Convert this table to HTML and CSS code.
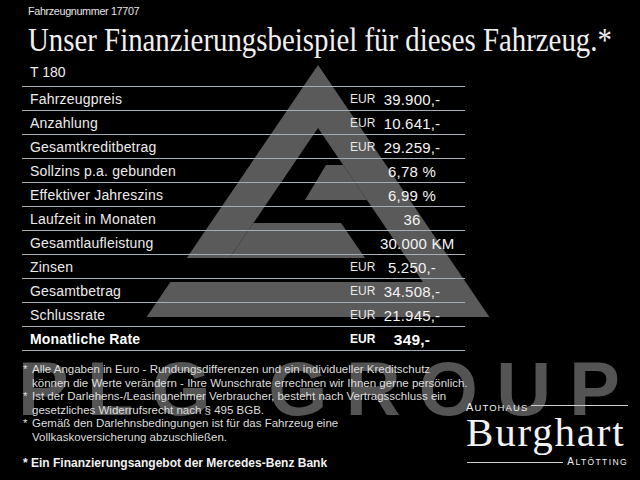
FILE: index.html
```html
<!DOCTYPE html>
<html lang="de">
<head>
<meta charset="utf-8">
<title>Finanzierungsbeispiel</title>
<link rel="stylesheet" href="styles.css">
</head>
<body>
<div class="page">
  <svg class="watermark" viewBox="0 0 640 480" width="640" height="480" aria-hidden="true">
    <g class="wm">
      <polygon points="318,65 146.6,317 489.4,317"/>
    </g>
    <g class="wm-cut">
      <polygon points="318,128 213.3,282 422.7,282"/>
      <polygon points="100,258 406.4,258 422.7,282 100,282"/>
    </g>
    <g class="wm">
      <polygon points="326,165 343.2,165 367,200 305,200"/>
      <polygon points="253.4,223 341,223 365,258 229.6,258"/>
    </g>
    <text class="wm-text" x="18" y="415" textLength="602" lengthAdjust="spacing">PLG GROUP</text>
  </svg>

  <div class="content">
    <div class="fznr">Fahrzeugnummer 17707</div>
    <div class="title">Unser Finanzierungsbeispiel für dieses Fahrzeug.*</div>
    <div class="model">T 180</div>

    <div class="table">
      <div class="row"><span class="lbl">Fahrzeugpreis</span><span class="cur">EUR</span><span class="val">39.900,-</span></div>
      <div class="row"><span class="lbl">Anzahlung</span><span class="cur">EUR</span><span class="val">10.641,-</span></div>
      <div class="row"><span class="lbl">Gesamtkreditbetrag</span><span class="cur">EUR</span><span class="val">29.259,-</span></div>
      <div class="row"><span class="lbl">Sollzins p.a. gebunden</span><span class="cur"></span><span class="val">6,78 %</span></div>
      <div class="row"><span class="lbl">Effektiver Jahreszins</span><span class="cur"></span><span class="val">6,99 %</span></div>
      <div class="row"><span class="lbl">Laufzeit in Monaten</span><span class="cur"></span><span class="val">36</span></div>
      <div class="row"><span class="lbl">Gesamtlaufleistung</span><span class="cur"></span><span class="val val-wide">30.000 KM</span></div>
      <div class="row"><span class="lbl">Zinsen</span><span class="cur">EUR</span><span class="val">5.250,-</span></div>
      <div class="row"><span class="lbl">Gesamtbetrag</span><span class="cur">EUR</span><span class="val">34.508,-</span></div>
      <div class="row"><span class="lbl">Schlussrate</span><span class="cur">EUR</span><span class="val">21.945,-</span></div>
      <div class="row row-bold"><span class="lbl">Monatliche Rate</span><span class="cur">EUR</span><span class="val">349,-</span></div>
    </div>

    <div class="footer">
      <div class="notes">
        <div class="fn"><span class="star">*</span><span>Alle Angaben in Euro - Rundungsdifferenzen und ein individueller Kreditschutz<br>können die Werte verändern - Ihre Wunschrate errechnen wir Ihnen gerne persönlich.</span></div>
        <div class="fn"><span class="star">*</span><span>Ist der Darlehens-/Leasingnehmer Verbraucher, besteht nach Vertragsschluss ein<br>gesetzliches Widerrufsrecht nach § 495 BGB.</span></div>
        <div class="fn"><span class="star">*</span><span>Gemäß den Darlehnsbedingungen ist für das Fahrzeug eine<br>Vollkaskoversicherung abzuschließen.</span></div>
        <div class="bank">* Ein Finanzierungsangebot der Mercedes-Benz Bank</div>
      </div>
      <div class="logo">
        <div class="logo-top"><span class="logo-small">A<span class="sc">UTOHAUS</span></span><span class="rule rule-top"></span></div>
        <div class="logo-name">Burghart</div>
        <div class="logo-bottom"><span class="rule rule-bottom"></span><span class="logo-small logo-city">A<span class="sc">LTÖTTING</span></span></div>
      </div>
    </div>
  </div>
</div>
</body>
</html>
```

FILE: styles.css
```css
html, body {
  margin: 0;
  padding: 0;
  background: #000;
}

.page {
  position: relative;
  width: 640px;
  height: 480px;
  overflow: hidden;
  background: #000;
  color: #fff;
  font-family: "Liberation Sans", Arial, sans-serif;
}

.watermark {
  position: absolute;
  left: 0;
  top: 0;
  z-index: 0;
}

.wm polygon {
  fill: #5a5a5a;
}

.wm-cut polygon {
  fill: #000;
}

.wm-text {
  fill: #545454;
  font-family: "Liberation Sans", Arial, sans-serif;
  font-weight: bold;
  font-size: 76px;
}

.content {
  position: relative;
  z-index: 1;
  padding-top: 4px;
}

.fznr {
  margin-left: 28px;
  font-size: 10.8px;
  line-height: 14px;
  letter-spacing: -0.35px;
  color: #e4e4e4;
}

.title {
  margin: 6px 0 0 28px;
  font-family: "Liberation Serif", "Times New Roman", serif;
  font-size: 33px;
  line-height: 33px;
  white-space: nowrap;
  color: #f0f0f0;
  transform: scaleX(0.874);
  transform-origin: left top;
}

.model {
  margin: 7px 0 0 30px;
  font-size: 14px;
  line-height: 16px;
  color: #eee;
}

.table {
  margin: 6px 0 0 22px;
  width: 443px;
  border-top: 1px solid #a6aeb8;
}

.row {
  display: grid;
  grid-template-columns: 320px 30px 64px;
  align-items: center;
  height: 23px;
  padding-left: 8px;
  border-bottom: 1px solid #a6aeb8;
}

.lbl {
  font-size: 14px;
  color: #ececec;
  letter-spacing: 0.2px;
}

.cur {
  font-size: 12px;
  color: #e8e8e8;
}

.val {
  font-size: 15px;
  text-align: center;
  color: #f4f4f4;
  padding-top: 2px;
  letter-spacing: 0.2px;
}

.val-wide {
  white-space: nowrap;
}

.row-bold .lbl,
.row-bold .cur,
.row-bold .val {
  font-weight: bold;
  color: #fff;
}

.row-bold .val {
  font-size: 15.5px;
}

.footer {
  display: flex;
  margin-top: 12px;
}

.notes {
  flex: none;
  width: 422px;
  padding-left: 23px;
  font-size: 11.5px;
  line-height: 13.5px;
  color: #dedede;
  white-space: nowrap;
}

.fn {
  display: flex;
}

.star {
  flex: none;
  width: 9px;
}

.bank {
  margin-top: 12px;
  font-size: 12px;
  line-height: 14px;
  font-weight: bold;
  color: #f2f2f2;
}

.logo {
  margin-left: auto;
  margin-right: 12px;
  margin-top: 37px;
  width: 162px;
  color: #f2f2f2;
}

.logo-top,
.logo-bottom {
  display: flex;
  align-items: flex-start;
}

.logo-small {
  font-size: 11px;
  line-height: 14px;
  letter-spacing: 1.1px;
  white-space: nowrap;
}

.sc {
  font-size: 9.5px;
}

.logo-city {
  font-size: 10px;
  line-height: 12px;
  letter-spacing: 1.4px;
}

.logo-city .sc {
  font-size: 8.5px;
}

.rule {
  flex: 1;
  height: 1px;
  background: #cfcfcf;
}

.rule-top {
  margin: 5px 0 0 3px;
}

.rule-bottom {
  margin: 6px 4px 0 1px;
}

.logo-name {
  margin-top: 2px;
  font-family: "Liberation Serif", "Times New Roman", serif;
  font-size: 41px;
  line-height: 31px;
  letter-spacing: 1.8px;
  white-space: nowrap;
}

.logo-bottom {
  margin-top: 8px;
}
```
